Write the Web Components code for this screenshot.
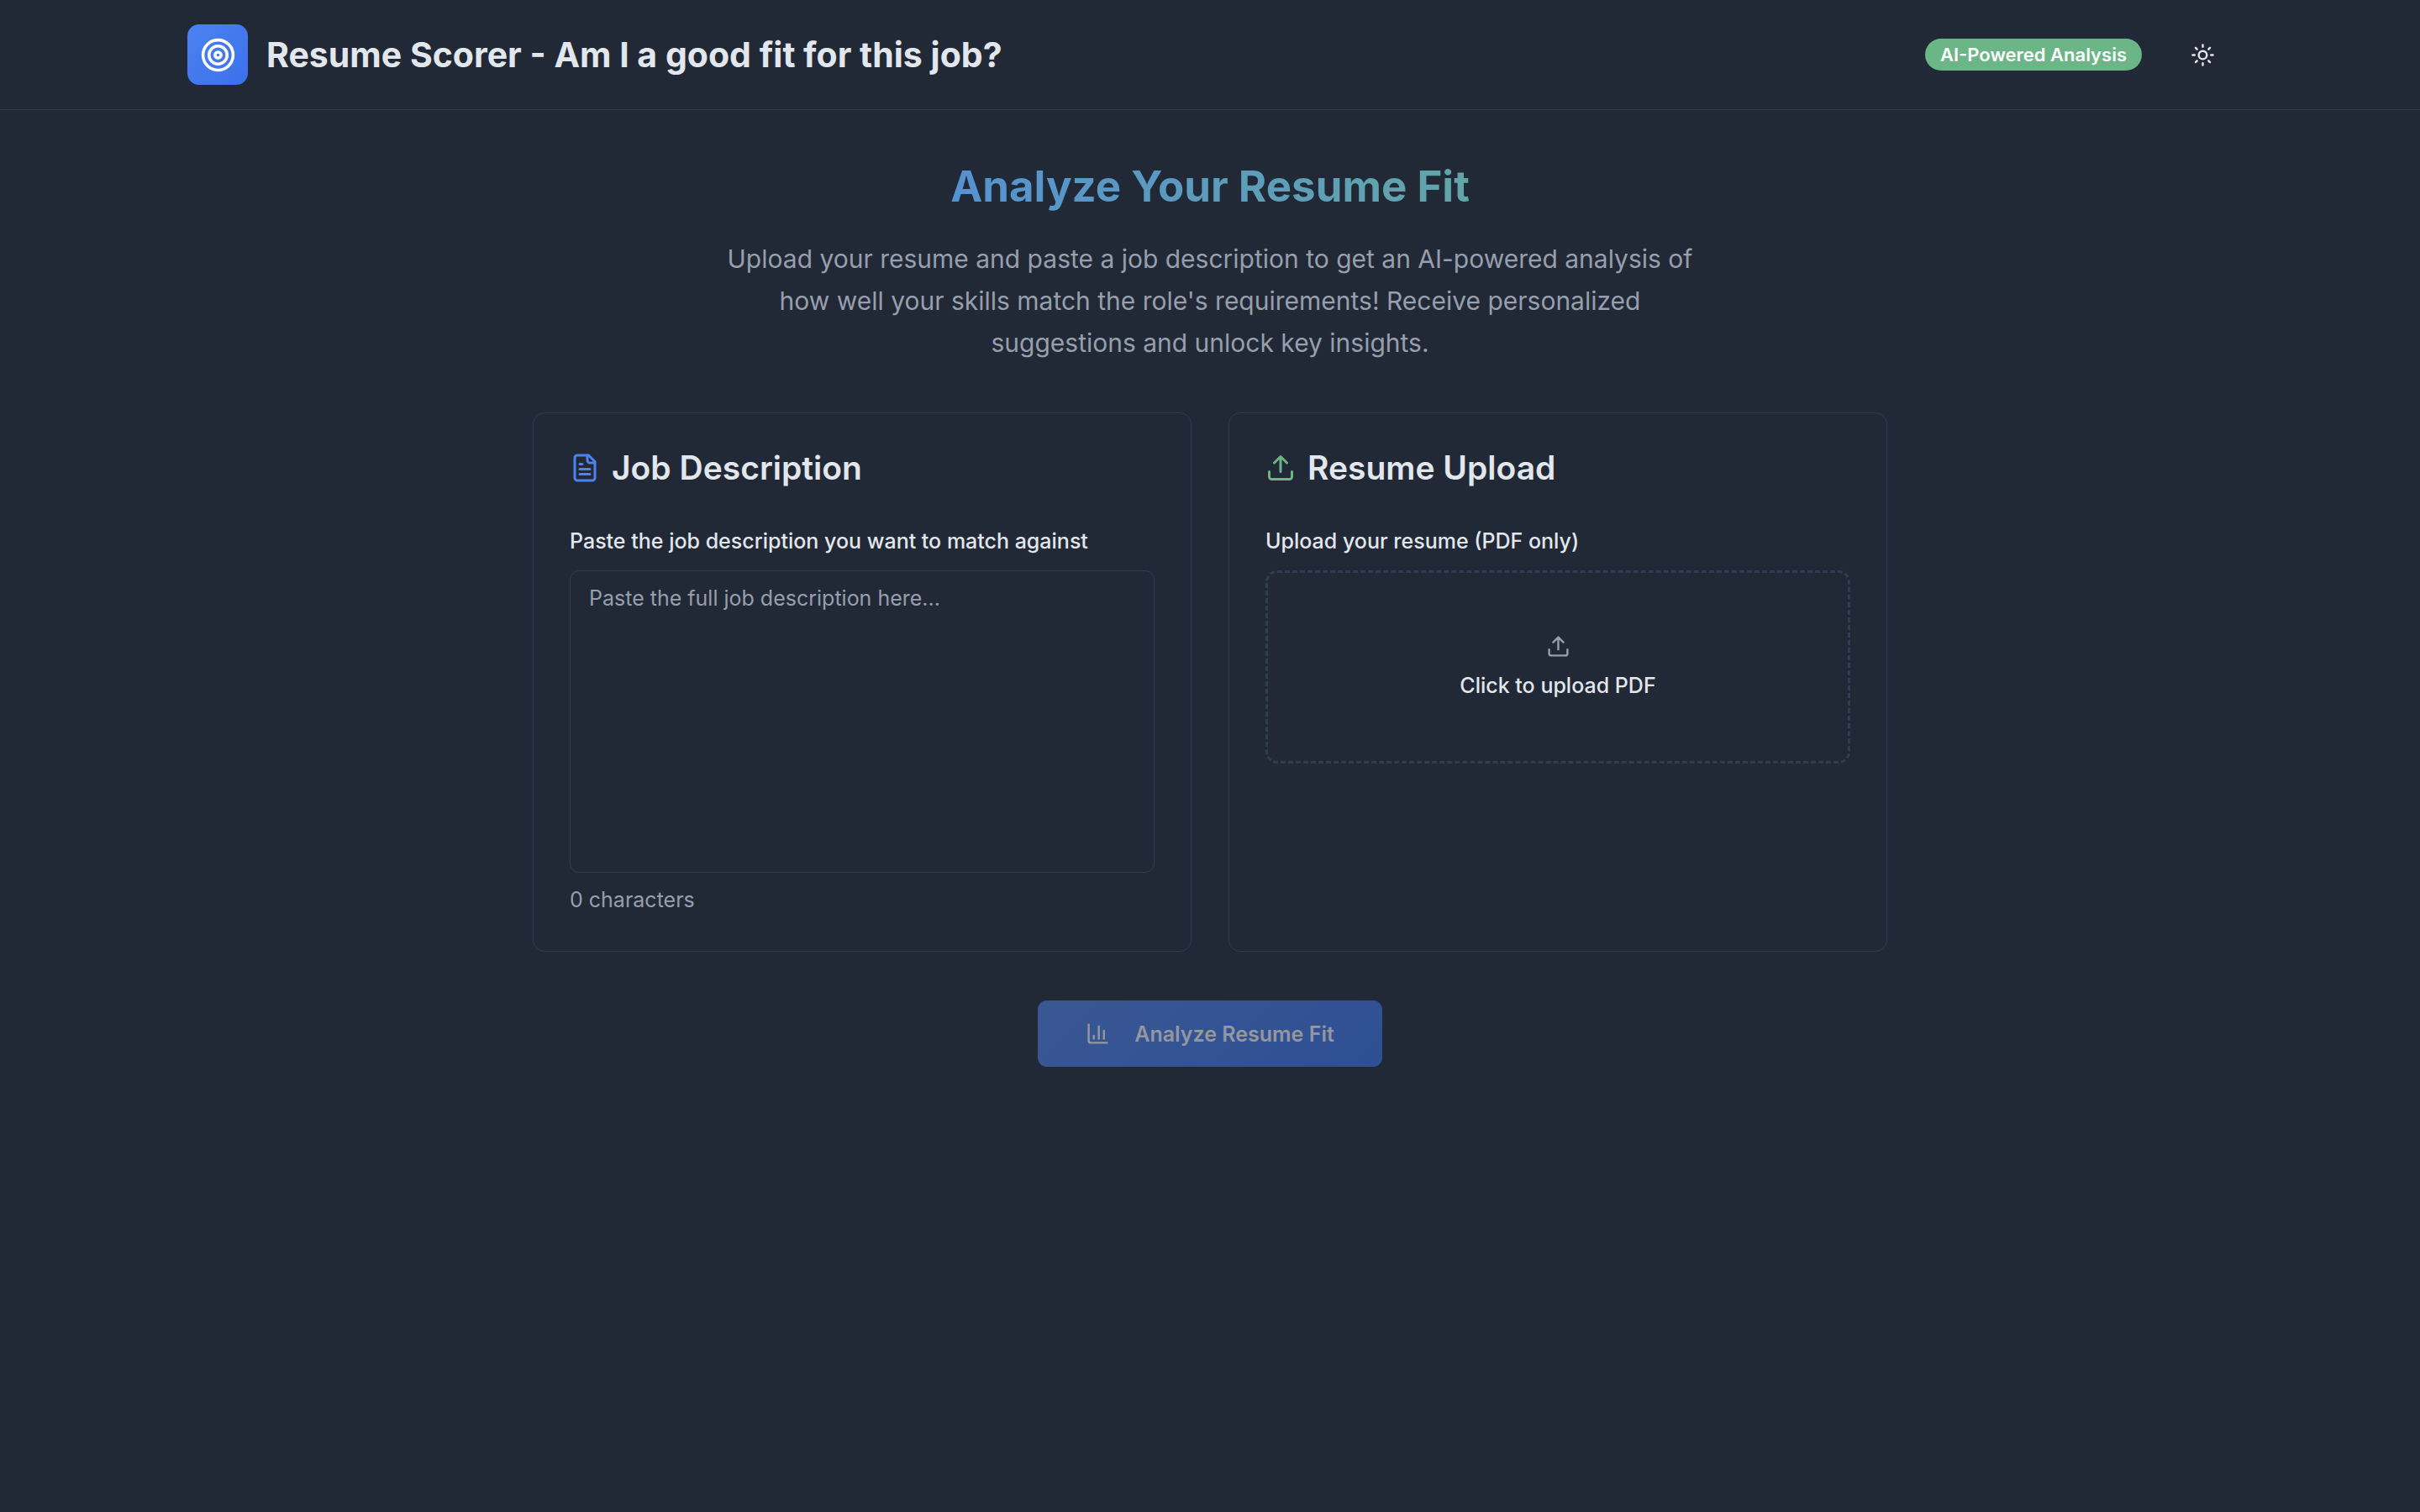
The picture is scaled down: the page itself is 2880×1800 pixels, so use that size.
<!DOCTYPE html>
<html lang="en">
<head>
<meta charset="utf-8">
<title>Resume Scorer</title>
<style>
  :root {
    --bg: #212936;
    --fg: #e2e6ed;
    --muted: #979eac;
    --line: #303d51;
    --blue: #4d82f1;
    --blue-deep: #3b70eb;
    --green: #6bb587;
  }
  html { background: var(--bg); }
  body {
    margin: 0;
    min-height: 100vh;
    background: var(--bg);
    color: var(--fg);
    font: 25px/36px Inter, "Liberation Sans", sans-serif;
  }
</style>
</head>
<body>
<resume-app></resume-app>

<script>
const ICONS = {
  target: '<circle cx="12" cy="12" r="10"/><circle cx="12" cy="12" r="6"/><circle cx="12" cy="12" r="2"/>',
  sun: '<circle cx="12" cy="12" r="4"/><path d="M12 2v2M12 20v2M4.93 4.93l1.41 1.41M17.66 17.66l1.41 1.41M2 12h2M20 12h2M6.34 17.66l-1.41 1.41M19.07 4.93l-1.41 1.41"/>',
  file: '<path d="M15 2H6a2 2 0 0 0-2 2v16a2 2 0 0 0 2 2h12a2 2 0 0 0 2-2V7Z"/><path d="M14 2v4a2 2 0 0 0 2 2h4M10 9H8M16 13H8M16 17H8"/>',
  upload: '<path d="M21 15v4a2 2 0 0 1-2 2H5a2 2 0 0 1-2-2v-4M17 8l-5-5-5 5M12 3v12"/>',
  chart: '<path d="M3 3v16a2 2 0 0 0 2 2h16M18 17V9M13 17V5M8 17v-3"/>'
};

class BaseElement extends HTMLElement {
  connectedCallback() {
    if (this.shadowRoot) return;
    this.attachShadow({ mode: 'open' }).innerHTML =
      '<style>*{box-sizing:border-box}' + this.styles() + '</style>' + this.markup();
    this.ready();
  }
  styles() { return ''; }
  markup() { return '<slot></slot>'; }
  ready() {}
}

customElements.define('line-icon', class extends BaseElement {
  styles() {
    return `:host{display:block;flex:none;width:var(--size,29px);height:var(--size,29px)}
      svg{display:block;width:100%;height:100%}`;
  }
  markup() {
    return `<svg viewBox="0 0 24 24" fill="none" stroke="currentColor" stroke-width="2"
      stroke-linecap="round" stroke-linejoin="round" aria-hidden="true">${ICONS[this.getAttribute('name')]}</svg>`;
  }
});

customElements.define('status-badge', class extends BaseElement {
  styles() {
    return `:host{display:block;padding:5px 18px;border-radius:19px;background:var(--green);
      color:#fff;font-size:22px;line-height:28px;font-weight:600;white-space:nowrap}`;
  }
});

customElements.define('app-header', class extends BaseElement {
  styles() {
    return `:host{display:block;border-bottom:1px solid var(--line)}
      .bar{max-width:2520px;box-sizing:border-box;margin:0 auto;padding:29px 43px;display:flex;align-items:center;justify-content:space-between}
      .brand{display:flex;align-items:center;gap:22px}
      .logo{display:grid;place-items:center;width:72px;height:72px;border-radius:14px;color:#fff;
        background:linear-gradient(135deg,var(--blue),var(--blue-deep));--size:43px}
      h1{margin:0;font-size:41px;line-height:58px;font-weight:700}
      .tools{display:flex;align-items:center;gap:36px}
      button{display:grid;place-items:center;width:72px;height:72px;padding:0;border:0;border-radius:11px;background:none;color:inherit}`;
  }
  markup() {
    return `<header class="bar">
      <div class="brand"><div class="logo"><line-icon name="target"></line-icon></div><h1><slot></slot></h1></div>
      <div class="tools"><status-badge>AI-Powered Analysis</status-badge>
        <button type="button" aria-label="Toggle theme"><line-icon name="sun"></line-icon></button></div>
    </header>`;
  }
});

customElements.define('page-intro', class extends BaseElement {
  styles() {
    return `:host{display:block;text-align:center}
      h2{margin:0 0 29px;font-size:51px;line-height:65px;font-weight:700;color:transparent;
        background:linear-gradient(90deg,var(--blue),var(--green));background-clip:text;-webkit-background-clip:text}
      p{margin:0 auto;max-width:1180px;font-size:30px;line-height:50px;color:var(--muted)}`;
  }
  markup() {
    return `<h2><slot name="title"></slot></h2><p><slot></slot></p>`;
  }
});

customElements.define('panel-card', class extends BaseElement {
  styles() {
    return `:host{display:block;padding:43px;border:1px solid var(--line);border-radius:14px}
      .head{display:flex;align-items:center;gap:14px;margin-bottom:43px}
      line-icon{--size:36px;color:var(--accent)}
      h3{margin:0;font-size:39px;line-height:43px;font-weight:600}`;
  }
  markup() {
    return `<div class="head"><line-icon name="${this.getAttribute('icon')}"></line-icon>
      <h3>${this.getAttribute('heading')}</h3></div><slot></slot>`;
  }
});

customElements.define('job-field', class extends BaseElement {
  styles() {
    return `:host{display:block}
      label{display:block;margin-bottom:12px;line-height:46px;font-weight:500}
      textarea{display:block;width:100%;height:360px;padding:14px 22px;border:1px solid var(--line);border-radius:11px;
        background:transparent;color:inherit;font:inherit;resize:none;outline:none}
      textarea::placeholder{color:var(--muted);opacity:1}
      p{margin:14px 0 0;color:var(--muted)}`;
  }
  markup() {
    return `<label for="job">Paste the job description you want to match against</label>
      <textarea id="job" placeholder="Paste the full job description here..."></textarea>
      <p>0 characters</p>`;
  }
  ready() {
    const area = this.shadowRoot.querySelector('textarea');
    const count = this.shadowRoot.querySelector('p');
    area.addEventListener('input', () => { count.textContent = area.value.length + ' characters'; });
  }
});

customElements.define('resume-field', class extends BaseElement {
  styles() {
    return `:host{display:block;font-weight:500}
      .caption{display:block;margin-bottom:12px;line-height:46px}
      .drop{display:flex;flex-direction:column;align-items:center;justify-content:center;gap:14px;height:230px;
        border:3px dashed var(--line);border-radius:14px}
      line-icon{color:var(--muted)}
      input{position:absolute;width:1px;height:1px;opacity:0;overflow:hidden}`;
  }
  markup() {
    return `<label class="caption" for="pdf">Upload your resume (PDF only)</label>
      <label class="drop" for="pdf"><line-icon name="upload"></line-icon><span>Click to upload PDF</span></label>
      <input id="pdf" type="file" accept="application/pdf">`;
  }
});

customElements.define('primary-button', class extends BaseElement {
  styles() {
    return `:host{display:block}
      button{display:flex;align-items:center;gap:29px;height:79px;padding:0 57px;border:0;border-radius:11px;
        background:linear-gradient(135deg,#395793,#2f4f94);color:#93979f;font:inherit;font-weight:600}`;
  }
  markup() {
    return `<button type="button" disabled><line-icon name="chart"></line-icon><slot></slot></button>`;
  }
});

customElements.define('resume-app', class extends BaseElement {
  styles() {
    return `:host{display:block}
      main{max-width:1612px;margin:0 auto;padding:58px 0;display:flex;flex-direction:column;gap:58px}
      .cards{display:grid;grid-template-columns:1fr 1fr;gap:44px}
      .action{display:flex;justify-content:center}
      .job{--accent:var(--blue)}
      .resume{--accent:var(--green)}`;
  }
  markup() {
    return `<app-header>Resume Scorer - Am I a good fit for this job?</app-header>
      <main>
        <page-intro><span slot="title">Analyze Your Resume Fit</span>Upload your resume and paste a job description to get an AI-powered analysis of how well your skills match the role's requirements! Receive personalized suggestions and unlock key insights.</page-intro>
        <div class="cards">
          <panel-card class="job" icon="file" heading="Job Description"><job-field></job-field></panel-card>
          <panel-card class="resume" icon="upload" heading="Resume Upload"><resume-field></resume-field></panel-card>
        </div>
        <div class="action"><primary-button>Analyze Resume Fit</primary-button></div>
      </main>`;
  }
});
</script>
</body>
</html>
